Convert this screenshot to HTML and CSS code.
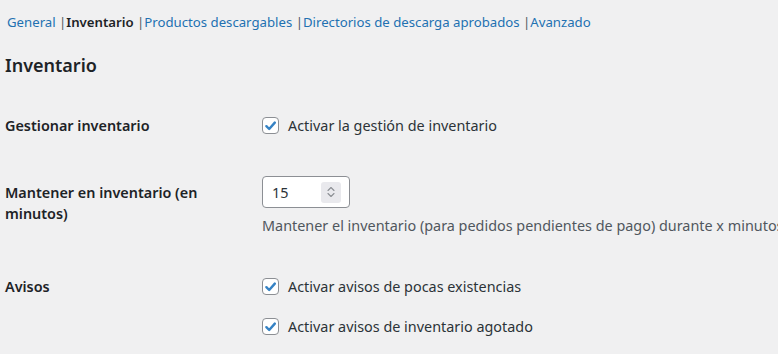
FILE: index.html
```html
<!DOCTYPE html>
<html lang="es">
<head>
<meta charset="utf-8">
<title>Inventario</title>
<link rel="stylesheet" href="styles.css">
</head>
<body>
<div class="wrap">
  <ul class="subnav">
    <li><a href="#">General</a> |</li>
    <li><a href="#" class="current">Inventario</a> |</li>
    <li><a href="#">Productos descargables</a> |</li>
    <li><a href="#">Directorios de descarga aprobados</a> |</li>
    <li><a href="#">Avanzado</a></li>
  </ul>
  <h2 class="title">Inventario</h2>
  <div class="form">
    <div class="row row-manage">
      <div class="label">Gestionar inventario</div>
      <div class="field">
        <label class="check"><span class="box"><svg viewBox="0 0 16 16" width="16" height="16"><path d="M3.6 8.2 L6.6 11.2 L12.6 4.4" fill="none" stroke="#3582c4" stroke-width="2.6" stroke-linecap="round" stroke-linejoin="round"/></svg></span>Activar la gestión de inventario</label>
      </div>
    </div>
    <div class="row row-hold">
      <div class="label">Mantener en inventario (en minutos)</div>
      <div class="field">
        <div class="number"><span class="num-value">15</span><span class="spin"><svg viewBox="0 0 20 20" width="20" height="20"><path d="M7 8.5 L10 5.5 L13 8.5 M7 11.5 L10 14.5 L13 11.5" fill="none" stroke="#8c8f94" stroke-width="1.1" stroke-linecap="round" stroke-linejoin="round"/></svg></span></div>
        <p class="desc">Mantener el inventario (para pedidos pendientes de pago) durante x minutos. Cuando se alcance este límite, el pedido pendiente será cancelado. Déjalo en blanco para desactivar.</p>
      </div>
    </div>
    <div class="row row-notices">
      <div class="label">Avisos</div>
      <div class="field checks">
        <label class="check"><span class="box"><svg viewBox="0 0 16 16" width="16" height="16"><path d="M3.6 8.2 L6.6 11.2 L12.6 4.4" fill="none" stroke="#3582c4" stroke-width="2.6" stroke-linecap="round" stroke-linejoin="round"/></svg></span>Activar avisos de pocas existencias</label>
        <label class="check"><span class="box"><svg viewBox="0 0 16 16" width="16" height="16"><path d="M3.6 8.2 L6.6 11.2 L12.6 4.4" fill="none" stroke="#3582c4" stroke-width="2.6" stroke-linecap="round" stroke-linejoin="round"/></svg></span>Activar avisos de inventario agotado</label>
      </div>
    </div>
  </div>
</div>
</body>
</html>
```
FILE: styles.css
```css
html, body {
  margin: 0;
  padding: 0;
  background: #f0f0f1;
  overflow: hidden;
}
body {
  font-family: "Noto Sans", "Open Sans", sans-serif;
  font-size: 14.4px;
  color: #1d2327;
}
.wrap {
  padding-left: 5px;
  width: 1200px;
}
.subnav {
  list-style: none;
  margin: 11px 0 0 2px;
  padding: 0;
  display: flex;
  line-height: 22px;
  font-size: 13.2px;
  color: #50575e;
}
.subnav li {
  white-space: pre;
}
.subnav a {
  color: #2271b1;
  text-decoration: none;
}
.subnav a.current {
  color: #1d2327;
  font-weight: 600;
}
.title {
  margin: 19px 0 14px;
  font-size: 18px;
  line-height: 26px;
  font-weight: 600;
}
.row {
  display: grid;
  grid-template-columns: 232px auto;
  column-gap: 25px;
}
.label {
  padding: 23px 0;
  font-weight: 600;
  line-height: 21px;
}
.field {
  padding: 17px 0;
}
.check {
  display: flex;
  align-items: center;
  height: 21px;
  margin-top: 6px;
  color: #2c3338;
}
.box {
  box-sizing: border-box;
  width: 17px;
  height: 17px;
  border: 1px solid #8c8f94;
  border-radius: 4px;
  background: #fff;
  margin-right: 9px;
  display: flex;
  align-items: center;
  justify-content: center;
}
.checks .check + .check {
  margin-top: 19px;
}
.number {
  box-sizing: border-box;
  width: 88px;
  height: 32px;
  border: 1px solid #8c8f94;
  border-radius: 4px;
  background: #fff;
  display: flex;
  align-items: center;
  padding-left: 9px;
  color: #2c3338;
}
.num-value {
  flex: 1;
}
.spin {
  width: 20px;
  height: 21px;
  background: #e9e9ed;
  border-radius: 3px;
  margin-right: 8px;
  display: flex;
  align-items: center;
  justify-content: center;
}
.desc {
  margin: 7px 0 0;
  line-height: 21px;
  color: #50575e;
  white-space: nowrap;
}
```
